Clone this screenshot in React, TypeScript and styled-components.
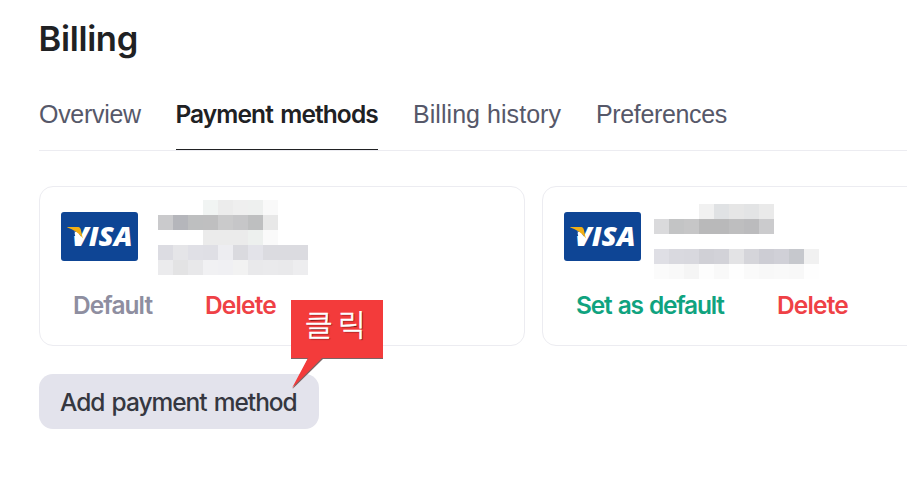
import React from 'react';
import styled, { createGlobalStyle } from 'styled-components';

const GlobalStyle = createGlobalStyle`
  *, *::before, *::after { box-sizing: border-box; }
  html, body { margin: 0; background: #fff; overflow: hidden; }
  body { font-family: Inter, "Liberation Sans", sans-serif; color: #202123; }
  button { font: inherit; border: 0; background: none; padding: 0; }
`;

const Page = styled.main`
  height: 479px;
  padding: 19px 0 0 39px;
  overflow: hidden;
`;

const Title = styled.h1`
  margin: 0;
  font-size: 34.5px;
  line-height: 40px;
  font-weight: 600;
  letter-spacing: -0.3px;
  margin-left: -0.5px;
`;

const Tabs = styled.nav`
  display: flex;
  gap: 35px;
  margin-top: 39px;
  height: 53px;
  border-bottom: 1px solid #ececf1;
`;

const Tab = styled.div<{ $active?: boolean; $width: number; $spacing: number }>`
  width: ${p => p.$width}px;
  line-height: 32px;
  white-space: nowrap;
  font-family: ${p => (p.$active ? 'Inter' : '"Liberation Sans"')}, sans-serif;
  font-size: ${p => (p.$active ? 24.5 : 25)}px;
  font-weight: ${p => (p.$active ? 600 : 400)};
  letter-spacing: ${p => p.$spacing}px;
  word-spacing: ${p => (p.$active ? 2 : 0)}px;
  text-indent: ${p => (p.$active ? -0.6 : 0)}px;
  color: ${p => (p.$active ? '#202123' : '#565869')};
  border-bottom: ${p => (p.$active ? '1px solid #202123' : '0')};
`;

const Cards = styled.section`
  display: flex;
  gap: 17px;
  margin-top: 35px;
`;

const Card = styled.article`
  flex: 0 0 486px;
  height: 160px;
  border: 1px solid #ececf1;
  border-radius: 14px;
`;

const CardHead = styled.div`
  display: flex;
  align-items: flex-start;
  height: 103px;
  padding-left: 21px;
`;

const VisaMark = styled.svg`
  flex: none;
  width: 77px;
  height: 49px;
  margin-top: 25px;
`;

const Mosaic = styled.div<{ $columns: number; $left: number; $top: number }>`
  display: grid;
  grid-template-columns: repeat(${p => p.$columns}, 15px);
  grid-auto-rows: 15px;
  margin: ${p => p.$top}px 0 0 ${p => p.$left}px;
`;

const Cell = styled.span<{ $tone: string }>`
  background: ${p => p.$tone};
`;

const Actions = styled.div<{ $left: number; $gap: number }>`
  display: flex;
  gap: ${p => p.$gap}px;
  padding-left: ${p => p.$left}px;
  line-height: 30px;
`;

const Action = styled.button<{ $color: string; $width: number; $spacing: number }>`
  width: ${p => p.$width}px;
  text-align: left;
  white-space: nowrap;
  font-size: 24.5px;
  font-weight: 600;
  line-height: 30px;
  letter-spacing: ${p => p.$spacing}px;
  word-spacing: 1.5px;
  color: ${p => p.$color};
`;

const Footer = styled.div`
  position: relative;
  margin-top: 28px;
`;

const AddButton = styled.button`
  display: block;
  width: 280px;
  height: 55px;
  padding-left: 21px;
  border-radius: 14px;
  background: #e3e3ec;
  color: #353740;
  text-align: left;
  white-space: nowrap;
  font-size: 24.5px;
  font-weight: 550;
  letter-spacing: -1.05px;
  word-spacing: 1.8px;
`;

const Callout = styled.div`
  position: absolute;
  left: 252px;
  top: -74px;
  width: 92px;
  height: 90px;
`;

const Bubble = styled.svg`
  display: block;
  width: 92px;
  height: 90px;
`;

const CalloutText = styled.span`
  position: absolute;
  left: 14px;
  top: 1px;
  white-space: nowrap;
  font: 300 30px/44px "Noto Sans CJK KR", sans-serif;
  letter-spacing: 5.5px;
  color: #fff;
  -webkit-text-stroke: 0.6px #fff;
  text-shadow: 1px 1px 1px #5c0d0d;
`;

const PAPER = '#ffffff';

const firstCells = [
  PAPER, PAPER, PAPER, '#f1f4f3', '#ececec', '#efefef', '#eef0ef', '#f9f9f9', PAPER, PAPER,
  '#cacacc', '#b5b6bb', '#bebfc0', '#bfbfc0', '#cacacb', '#c6c6c8', '#bebfc0', '#e8e8e8', PAPER, PAPER,
  PAPER, PAPER, PAPER, '#ebebeb', '#ebebeb', '#ebebeb', '#edf0ee', '#fafafa', PAPER, PAPER,
  '#dcdce2', '#e5e5e8', '#e0e0e6', '#dfdfe5', '#ededf1', '#dadadf', '#e3e3e9', '#dbdbe0', '#dbdbe0', '#dbdbe0',
  '#ebebed', '#e3e3e4', '#e8e8ea', '#f1f1f3', '#f0f0f3', '#f2f2f2', '#e9e9eb', '#eaeaec', '#e9e9eb', '#ededef',
];

const secondCells = [
  PAPER, PAPER, PAPER, '#f1f1f1', '#e0e2e4', '#e6e6e6', '#e3e4e5', '#eaeaea', PAPER, PAPER, PAPER,
  '#dadadc', '#c3c4c5', '#c6c6c7', '#b9b9ba', '#b9b9ba', '#bebebf', '#bbbbbd', '#cbcbcd', PAPER, PAPER, PAPER,
  PAPER, PAPER, PAPER, PAPER, PAPER, PAPER, PAPER, PAPER, PAPER, PAPER, PAPER,
  '#dfdfe5', '#d9d9df', '#d8d8de', '#d0d0d6', '#d2d2d8', '#e3e3e5', '#d5d5da', '#cdcdd4', '#d0d0d7', '#c6c8cd', '#f1f1f1',
  '#fbfbfb', '#f9f9f9', '#f5f5f5', '#fdfdfd', '#f9f9f9', '#fefefe', '#fafafa', '#f8f8f8', '#f9f9f9', '#f8f8f8', '#fefefe',
];

const Visa = () => (
  <VisaMark viewBox="0 0 77 49" role="img" aria-label="Visa">
    <rect width="77" height="49" rx="3" fill="#0e4595" />
    <text
      x="10.5"
      y="34"
      fill="#fff"
      fontFamily="Open Sans"
      fontStyle="italic"
      fontWeight="800"
      fontSize="26.5"
      textLength="61"
      lengthAdjust="spacingAndGlyphs"
    >
      VISA
    </text>
    <path d="M6 14V24H14.3L13.5 21.5L20 14Z" fill="#0e4595" />
    <path d="M6.3 15H16.2C18.2 15 19.2 15.6 19.8 17.4L21.8 26.5C20 23.5 17.5 21.3 13.8 19C11.5 17.5 9 16.3 6.3 15.5Z" fill="#f2ae14" />
    <path d="M13.5 19.2C17.5 21.5 20 23.5 21.6 27L18 31L16 29Z" fill="#fff" />
  </VisaMark>
);

const PixelBlock = ({ cells, columns, left, top }: { cells: string[]; columns: number; left: number; top: number }) => (
  <Mosaic $columns={columns} $left={left} $top={top}>
    {cells.map((tone, i) => (
      <Cell key={i} $tone={tone} />
    ))}
  </Mosaic>
);

export default function App() {
  return (
    <>
      <GlobalStyle />
      <Page>
        <Title>Billing</Title>
        <Tabs>
          <Tab $width={102} $spacing={-0.3}>Overview</Tab>
          <Tab $active $width={202} $spacing={-0.9}>Payment methods</Tab>
          <Tab $width={148} $spacing={0.05}>Billing history</Tab>
          <Tab $width={131} $spacing={-0.35}>Preferences</Tab>
        </Tabs>
        <Cards>
          <Card>
            <CardHead>
              <Visa />
              <PixelBlock cells={firstCells} columns={10} left={20} top={13} />
            </CardHead>
            <Actions $left={33} $gap={52}>
              <Action $color="#8e8ea0" $width={80} $spacing={-0.95}>Default</Action>
              <Action $color="#ef4146" $width={72} $spacing={-0.85}>Delete</Action>
            </Actions>
          </Card>
          <Card>
            <CardHead>
              <Visa />
              <PixelBlock cells={secondCells} columns={11} left={13} top={17} />
            </CardHead>
            <Actions $left={33} $gap={51}>
              <Action $color="#10a37f" $width={150} $spacing={-1.27}>Set as default</Action>
              <Action $color="#ef4146" $width={72} $spacing={-0.85}>Delete</Action>
            </Actions>
          </Card>
        </Cards>
        <Footer>
          <AddButton>Add payment method</AddButton>
          <Callout>
            <Bubble viewBox="0 0 92 90">
              <path d="M0 0H92V59H32L1.5 89L17 59H0Z" fill="#7b6464" />
              <path d="M0 0H92V58H31L1 88L17 58H0Z" fill="#f33b3b" />
            </Bubble>
            <CalloutText>클릭</CalloutText>
          </Callout>
        </Footer>
      </Page>
    </>
  );
}
